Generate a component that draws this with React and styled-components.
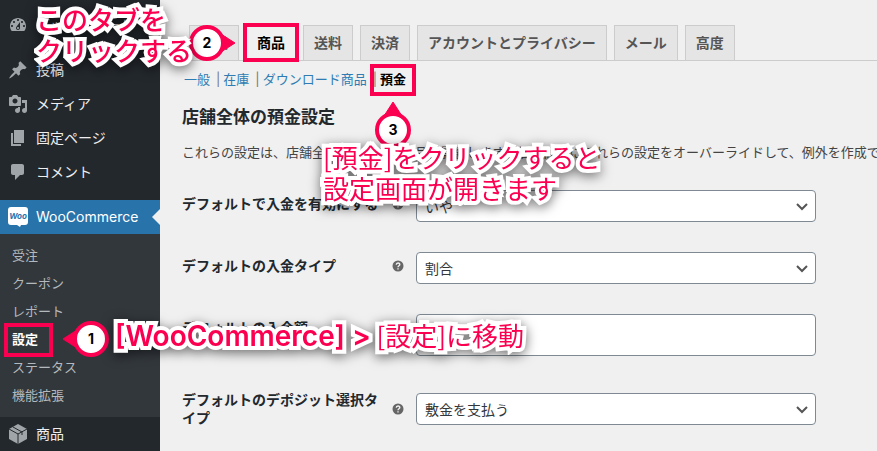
import React, {useState} from 'react';
import styled, {createGlobalStyle, css} from 'styled-components';

const RED = '#fb0050';

const GlobalStyle = createGlobalStyle`
	*, *::before, *::after {
		box-sizing: border-box;
	}
	body {
		margin: 0;
		background: #f0f0f0;
		color: #23282d;
		font-family: Inter, "Noto Sans CJK JP", sans-serif;
		font-size: 13px;
	}
`;

const Page = styled.div`
	position: relative;
	display: flex;
	height: 100vh;
	overflow: hidden;
`;

const Sidebar = styled.nav`
	flex: 0 0 160px;
	padding-top: 8px;
	background: #23282d;
`;

const MenuGroup = styled.ul`
	margin: 0 0 11px;
	padding: 0;
	list-style: none;
`;

const MenuLink = styled.a`
	position: relative;
	display: flex;
	align-items: center;
	gap: 8px;
	height: 34px;
	padding-left: 8px;
	color: ${p => p.$current ? '#fff' : '#eee'};
	background: ${p => p.$current ? '#2973ab' : 'transparent'};
	font-size: 14px;
	line-height: 18px;
	text-decoration: none;
	white-space: nowrap;

	${p => p.$current && css`
		&::after {
			content: '';
			position: absolute;
			right: 0;
			top: 9px;
			border: 8px solid transparent;
			border-left-width: 0;
			border-right-color: #f0f0f0;
		}
	`}
`;

const MenuIcon = styled.svg`
	flex: none;
	width: 20px;
	height: 20px;
	fill: #a0a5aa;
`;

const SubMenu = styled.ul`
	margin: 0;
	padding: 7px 0 8px;
	background: #32373c;
	list-style: none;
`;

const SubLink = styled.a`
	display: block;
	padding: 5px 12px;
	color: ${p => p.$current ? '#fff' : '#b4b9be'};
	font-size: 13px;
	font-weight: ${p => p.$current ? 700 : 400};
	line-height: 18px;
	text-decoration: none;
`;

const Main = styled.main`
	flex: 1;
	min-width: 0;
	padding: 25px 0 0 22px;
	overflow: hidden;
`;

const Tabs = styled.nav`
	display: flex;
	gap: 7px;
	padding-left: 7px;
	border-bottom: 1px solid #ccc;
`;

const Tab = styled.a`
	margin-bottom: -1px;
	padding: 5px 10px;
	border: 1px solid #ccc;
	border-bottom-color: ${p => p.$active ? '#f0f0f0' : '#ccc'};
	background: ${p => p.$active ? '#f0f0f0' : '#e5e5e5'};
	color: ${p => p.$active ? '#000' : '#555'};
	font-size: 14px;
	font-weight: 700;
	line-height: 24px;
	text-decoration: none;
	white-space: nowrap;
`;

const Sections = styled.ul`
	display: flex;
	margin: 8px 0 0;
	padding: 0 0 0 2px;
	list-style: none;
	line-height: 20px;
	white-space: nowrap;
`;

const Section = styled.li`
	color: #777;

	& + &::before {
		content: '|';
		margin: 0 3px 0 6px;
	}
`;

const SectionLink = styled.a`
	color: ${p => p.$current ? '#000' : '#2e7cb3'};
	font-weight: ${p => p.$current ? 700 : 400};
	text-decoration: none;
`;

const Heading = styled.h2`
	margin: 16px 0 0;
	font-size: 17px;
	line-height: 24px;
`;

const Description = styled.p`
	margin: 13px 0;
	color: #444;
	line-height: 20px;
	white-space: nowrap;
`;

const FieldRow = styled.div`
	display: flex;
	align-items: flex-start;
`;

const LabelCell = styled.div`
	display: flex;
	align-items: center;
	flex: 0 0 224px;
	padding: 20px 2px 20px 0;
`;

const Label = styled.label`
	flex: 1;
	padding-right: 9px;
	font-size: 14px;
	font-weight: 700;
	line-height: 18px;
`;

const HelpIcon = styled.svg`
	flex: none;
	width: 12px;
	height: 12px;
`;

const FieldCell = styled.div`
	position: relative;
	flex: 0 1 400px;
	align-self: center;
	margin: 15px 10px;
`;

const control = css`
	display: block;
	width: 100%;
	border: 1px solid #7e8993;
	border-radius: 4px;
	background: #fff;
	color: #32373c;
	font-family: inherit;
	font-size: 14px;
`;

const Select = styled.select`
	${control}
	height: 32px;
	padding: 0 24px 0 8px;
	appearance: none;
`;

const Input = styled.input`
	${control}
	height: 42px;
	padding: 0 8px;
`;

const Chevron = styled.svg`
	position: absolute;
	right: 8px;
	top: 11px;
	width: 12px;
	height: 12px;
	fill: none;
	stroke: #555;
	stroke-width: 2;
	pointer-events: none;
`;

// tutorial marks that float over the screen
const Highlight = styled.div`
	position: absolute;
	left: ${p => p.$x}px;
	top: ${p => p.$y}px;
	width: ${p => p.$w}px;
	height: ${p => p.$h}px;
	border: 4px solid ${RED};
	pointer-events: none;
`;

const PinBox = styled.svg`
	position: absolute;
	left: ${p => p.$x - 30}px;
	top: ${p => p.$y - 30}px;
	width: 60px;
	height: 60px;
	pointer-events: none;

	text {
		font-size: 14px;
		font-weight: 700;
		text-anchor: middle;
	}
`;

const Note = styled.p`
	position: absolute;
	left: ${p => p.$x}px;
	top: ${p => p.$y}px;
	margin: 0;
	color: ${RED};
	font-family: "Noto Sans CJK JP", sans-serif;
	font-size: 26px;
	font-weight: ${p => p.$medium ? 500 : 400};
	line-height: 31px;
	white-space: nowrap;
	-webkit-text-stroke: 8px #fff;
	paint-order: stroke fill;
	stroke-linejoin: round;
	filter: drop-shadow(0 3px 6px rgba(0, 0, 0, 0.55));
	pointer-events: none;

	b {
		font-family: Inter, sans-serif;
		font-size: 28px;
		font-weight: 600;
	}
`;

const icons = {
	dashboard: 'M3.76 16h12.48c1.09-1.37 1.76-3.11 1.76-5 0-4.42-3.58-8-8-8s-8 3.58-8 8c0 1.89.67 3.63 1.76 5zM10 4c.55 0 1 .45 1 1s-.45 1-1 1-1-.45-1-1 .45-1 1-1zM6 6c.55 0 1 .45 1 1s-.45 1-1 1-1-.45-1-1 .45-1 1-1zm8 0c.55 0 1 .45 1 1s-.45 1-1 1-1-.45-1-1 .45-1 1-1zm-5.37 5.55L12 7v6c0 1.1-.9 2-2 2s-2-.9-2-2c0-.57.24-1.08.63-1.45zM4 10c.55 0 1 .45 1 1s-.45 1-1 1-1-.45-1-1 .45-1 1-1zm12 0c.55 0 1 .45 1 1s-.45 1-1 1-1-.45-1-1 .45-1 1-1zm-5 3c0-.55-.45-1-1-1s-1 .45-1 1 .45 1 1 1 1-.45 1-1z',
	post: 'M10.44 3.02l1.82-1.82 6.36 6.35-1.83 1.82c-1.05-.68-2.48-.57-3.41.36l-.75.75c-.92.93-1.04 2.35-.35 3.41l-1.83 1.82-2.41-2.41-2.8 2.79c-.42.42-3.38 2.71-3.8 2.29s1.86-3.39 2.28-3.81l2.79-2.79L4.1 9.36l1.83-1.82c1.05.69 2.48.57 3.4-.36l.75-.75c.93-.92 1.05-2.35.36-3.41z',
	media: 'M13 11V4c0-.55-.45-1-1-1h-1.67L9 1H5L3.67 3H2c-.55 0-1 .45-1 1v7c0 .55.45 1 1 1h10c.55 0 1-.45 1-1zM7 4.5c1.38 0 2.5 1.12 2.5 2.5S8.38 9.5 7 9.5 4.5 8.38 4.5 7 5.62 4.5 7 4.5zM14 6h5v10.5c0 1.38-1.12 2.5-2.5 2.5S14 17.88 14 16.5s1.12-2.5 2.5-2.5c.17 0 .34.02.5.05V9h-3V6zm-4 8.05V13h2v3.5c0 1.38-1.12 2.5-2.5 2.5S7 17.88 7 16.5 8.12 14 9.5 14c.17 0 .34.02.5.05z',
	page: 'M6 15V2h10v13H6zm-1 1h8v2H3V5h2v11z',
	comments: 'M5 2h9c1.1 0 2 .9 2 2v7c0 1.1-.9 2-2 2h-2l-5 5v-5H5c-1.1 0-2-.9-2-2V4c0-1.1.9-2 2-2z'
};

function Item({icon, title, current, children}) {
	return (
		<li>
			<MenuLink href='#' $current={current}>
				{typeof icon === 'string'
					? <MenuIcon viewBox='0 0 20 20'><path d={icons[icon]} /></MenuIcon>
					: icon}
				{title}
			</MenuLink>
			{children}
		</li>
	);
}

const wooIcon = (
	<MenuIcon viewBox='0 0 20 20'>
		<path fill='#fff' d='M3 0h14a3 3 0 0 1 3 3v12a3 3 0 0 1-3 3h-4l-1 2-3-2H3a3 3 0 0 1-3-3V3a3 3 0 0 1 3-3z' />
		<text x='10' y='12' fill='#2973ab' fontSize='8' fontWeight='700' fontStyle='italic' textAnchor='middle'>Woo</text>
	</MenuIcon>
);

const productIcon = (
	<MenuIcon viewBox='0 0 20 20'>
		<path d='M10 0l9 5v10l-9 5-9-5V5z' />
		<path d='M1 5l9 5 9-5M5 3l9 5v3M10 10v10' fill='none' stroke='#23282d' />
	</MenuIcon>
);

function Pin({x, y, turn, children}) {
	return (
		<PinBox $x={x} $y={y} viewBox='-30 -30 60 60'>
			<path d='M28 0L14 -9V9z' fill={RED} stroke={RED} strokeLinejoin='round' transform={`rotate(${turn})`} />
			<circle r='16' fill='#fff' stroke={RED} strokeWidth='4' />
			<text y='5'>{children}</text>
		</PinBox>
	);
}

function Field({id, label, children}) {
	return (
		<FieldRow>
			<LabelCell>
				<Label htmlFor={id}>{label}</Label>
				<HelpIcon viewBox='0 0 12 12'>
					<circle cx='6' cy='6' r='5.5' fill='#666' />
					<path d='M4.3 4.7c0-2.2 3.5-2.2 3.5-.2C7.8 5.8 6 5.7 6 7.2M6 8.2v1.4' fill='none' stroke='#f0f0f0' strokeWidth='1.4' />
				</HelpIcon>
			</LabelCell>
			<FieldCell>{children}</FieldCell>
		</FieldRow>
	);
}

function SelectField({id, label, options}) {
	const [value, setValue] = useState(options[0]);

	return (
		<Field id={id} label={label}>
			<Select id={id} value={value} onChange={e => setValue(e.target.value)}>
				{options.map(o => <option key={o} value={o}>{o}</option>)}
			</Select>
			<Chevron viewBox='0 0 12 12'><path d='M1 3l5 5 5-5' /></Chevron>
		</Field>
	);
}

const subItems = ['受注', 'クーポン', 'レポート', '設定', 'ステータス', '機能拡張'];
const tabs = ['一般', '商品', '送料', '決済', 'アカウントとプライバシー', 'メール', '高度'];
const sections = ['一般', '在庫', 'ダウンロード商品', '預金'];

export default function App() {
	const [amount, setAmount] = useState('50');

	return (
		<Page>
			<GlobalStyle />
			<Sidebar>
				<MenuGroup>
					<Item icon='dashboard' title='ダッシュボード' />
				</MenuGroup>
				<MenuGroup>
					<Item icon='post' title='投稿' />
					<Item icon='media' title='メディア' />
					<Item icon='page' title='固定ページ' />
					<Item icon='comments' title='コメント' />
				</MenuGroup>
				<MenuGroup>
					<Item icon={wooIcon} title='WooCommerce' current>
						<SubMenu>
							{subItems.map(s => (
								<li key={s}><SubLink href='#' $current={s === '設定'}>{s}</SubLink></li>
							))}
						</SubMenu>
					</Item>
					<Item icon={productIcon} title='商品' />
				</MenuGroup>
			</Sidebar>
			<Main>
				<Tabs>
					{tabs.map(t => <Tab key={t} href='#' $active={t === '商品'}>{t}</Tab>)}
				</Tabs>
				<Sections>
					{sections.map(s => (
						<Section key={s}><SectionLink href='#' $current={s === '預金'}>{s}</SectionLink></Section>
					))}
				</Sections>
				<Heading>店舗全体の預金設定</Heading>
				<Description>これらの設定は、店舗全体のすべての商品に影響します。個別商品にこれらの設定をオーバーライドして、例外を作成できます。</Description>
				<form>
					<SelectField id='enable' label='デフォルトで入金を有効にする' options={['いや', 'はい']} />
					<SelectField id='type' label='デフォルトの入金タイプ' options={['割合', '定額']} />
					<Field id='amount' label='デフォルトの入金額'>
						<Input id='amount' type='text' value={amount} onChange={e => setAmount(e.target.value)} />
					</Field>
					<SelectField id='selected' label='デフォルトのデポジット選択タイプ' options={['敷金を支払う', '全額を支払う']} />
				</form>
			</Main>

			<Highlight $x={4} $y={323} $w={49} $h={34} />
			<Highlight $x={243} $y={23} $w={56} $h={39} />
			<Highlight $x={370} $y={64} $w={46} $h={32} />
			<Pin x={91} y={339} turn={180}>1</Pin>
			<Pin x={207} y={43} turn={0}>2</Pin>
			<Pin x={393} y={130} turn={-90}>3</Pin>
			<Note $x={36} $y={3} $medium>このタブを<br />クリックする</Note>
			<Note $x={323} $y={141}>[預金]をクリックすると<br />設定画面が開きます</Note>
			<Note $x={115} $y={319}><b>[WooCommerce] &gt;</b> [設定]に移動</Note>
		</Page>
	);
}
